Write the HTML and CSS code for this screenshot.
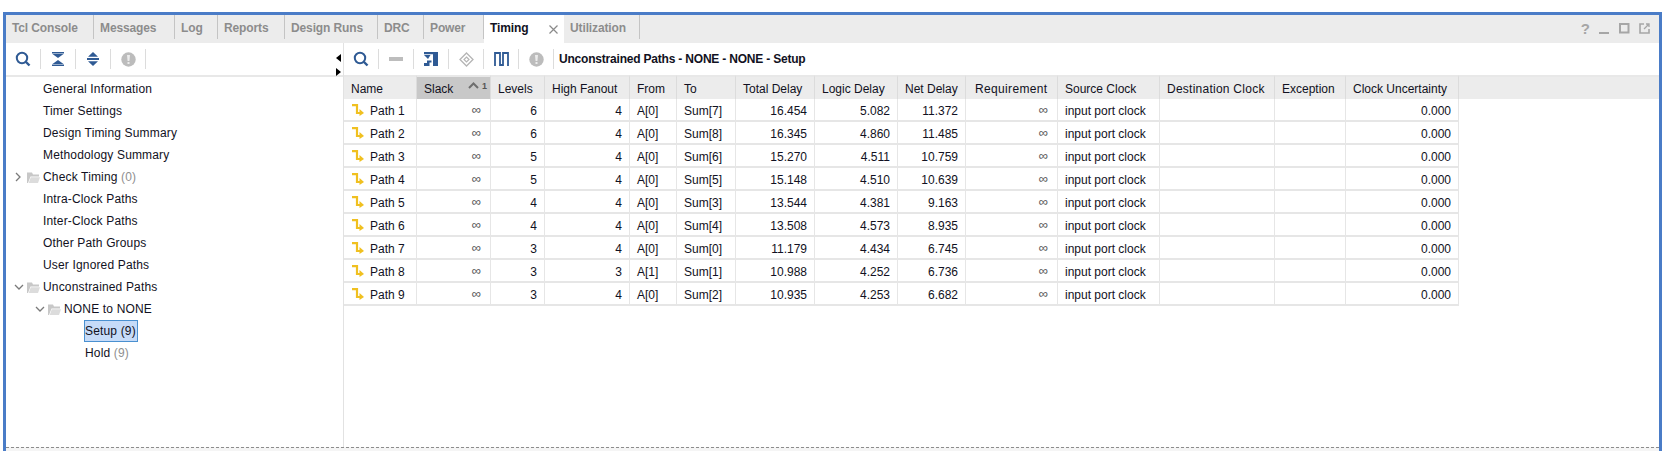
FILE: index.html
```html
<!DOCTYPE html>
<html lang="en">
<head>
    <meta charset="UTF-8">
    <title>Timing</title>
    <link rel="stylesheet" href="styles.css">
</head>
<body>
<div class="frame">

    <div class="tabbar">
        <div class="tab w-tcl">Tcl Console</div>
        <div class="tab w-msg">Messages</div>
        <div class="tab w-log">Log</div>
        <div class="tab w-rep">Reports</div>
        <div class="tab w-run">Design Runs</div>
        <div class="tab w-drc">DRC</div>
        <div class="tab w-pow">Power</div>
        <div class="tab tab-active">Timing<svg class="tab-close" width="9" height="9" viewBox="0 0 9 9"><path d="M.5 .5L8.5 8.5M8.5 .5L.5 8.5" stroke="#8a8a8a" stroke-width="1.2"/></svg></div>
        <div class="tab w-uti">Utilization</div>
        <div class="win-btns">
            <span class="help">?</span>
            <svg width="11" height="11" viewBox="0 0 11 11"><rect x="0" y="9" width="10" height="2" fill="#a6a6a6"/></svg>
            <svg width="11" height="11" viewBox="0 0 11 11"><rect x="1" y="1" width="8.5" height="8.5" fill="none" stroke="#a6a6a6" stroke-width="2"/></svg>
            <svg width="11" height="11" viewBox="0 0 11 11"><path d="M5 1H1V10H10V6" fill="none" stroke="#a6a6a6" stroke-width="1.6"/><path d="M5 6L10 1M7 1H10V4" fill="none" stroke="#a6a6a6" stroke-width="1.3"/></svg>
        </div>
    </div>

    <div class="split">
        <div class="left-pane">
            <div class="toolbar">
                <span class="tool">
                    <svg width="16" height="16" viewBox="0 0 16 16"><circle cx="7" cy="7" r="5.2" fill="none" stroke="#2f5a94" stroke-width="2"/><path d="M11 11L14.5 14.5" stroke="#2f5a94" stroke-width="2.4"/></svg>
                </span>
                <span class="tool">
                    <svg width="12" height="14" viewBox="0 0 12 14"><rect x="0" y="0" width="12" height="1.5" fill="#2f5a94"/><path d="M.5 2H11.5L6 6Z" fill="#2f5a94"/><path d="M.5 12H11.5L6 8Z" fill="#2f5a94"/><rect x="0" y="12.5" width="12" height="1.5" fill="#2f5a94"/></svg>
                </span>
                <span class="tool">
                    <svg width="12" height="14" viewBox="0 0 12 14"><path d="M1 4.8H11L6 0Z" fill="#2f5a94"/><rect x="0" y="6" width="12" height="2" fill="#2f5a94"/><path d="M1 9.2H11L6 14Z" fill="#2f5a94"/></svg>
                </span>
                <span class="tool">
                    <svg width="15" height="15" viewBox="0 0 15 15"><circle cx="7.5" cy="7.5" r="7.2" fill="#bcbcbc"/><path d="M6 3H9L8.4 9H6.6Z" fill="#ececec"/><rect x="6.5" y="10" width="2" height="2" fill="#ececec"/></svg>
                </span>
            </div>
            <div class="tree">
                <div class="node lvl1">General Information</div>
                <div class="node lvl1">Timer Settings</div>
                <div class="node lvl1">Design Timing Summary</div>
                <div class="node lvl1">Methodology Summary</div>
                <div class="node lvl0">
                    <svg class="chev chev-closed" width="8" height="10" viewBox="0 0 8 10"><path d="M2 1L6 5L2 9" fill="none" stroke="#7a7a7a" stroke-width="1.3"/></svg>
                    <svg class="folder" width="13" height="11" viewBox="0 0 13 11"><path d="M0 .5H5L6 2.5H12V4.5H3.5L1 11H0Z" fill="#c8c8c8"/><path d="M3.8 5.3H13L11 11H1.7Z" fill="#dcdcdc"/></svg>
                    <span>Check Timing <span class="count">(0)</span></span>
                </div>
                <div class="node lvl1">Intra-Clock Paths</div>
                <div class="node lvl1">Inter-Clock Paths</div>
                <div class="node lvl1">Other Path Groups</div>
                <div class="node lvl1">User Ignored Paths</div>
                <div class="node lvl0">
                    <svg class="chev" width="10" height="10" viewBox="0 0 10 10"><path d="M1 3L5 7L9 3" fill="none" stroke="#7a7a7a" stroke-width="1.3"/></svg>
                    <svg class="folder" width="13" height="11" viewBox="0 0 13 11"><path d="M0 .5H5L6 2.5H12V4.5H3.5L1 11H0Z" fill="#c8c8c8"/><path d="M3.8 5.3H13L11 11H1.7Z" fill="#dcdcdc"/></svg>
                    <span>Unconstrained Paths</span>
                </div>
                <div class="node lvl0b">
                    <svg class="chev" width="10" height="10" viewBox="0 0 10 10"><path d="M1 3L5 7L9 3" fill="none" stroke="#7a7a7a" stroke-width="1.3"/></svg>
                    <svg class="folder" width="13" height="11" viewBox="0 0 13 11"><path d="M0 .5H5L6 2.5H12V4.5H3.5L1 11H0Z" fill="#c8c8c8"/><path d="M3.8 5.3H13L11 11H1.7Z" fill="#dcdcdc"/></svg>
                    <span>NONE to NONE</span>
                </div>
                <div class="node lvl2"><span class="selected">Setup (9)</span></div>
                <div class="node lvl2"><span>Hold <span class="count">(9)</span></span></div>
            </div>
            <div class="sash-arrows">
                <span class="arrow-left"></span>
                <span class="arrow-right"></span>
            </div>
        </div>

        <div class="right-pane">
            <div class="toolbar">
                <span class="tool">
                    <svg width="16" height="16" viewBox="0 0 16 16"><circle cx="7" cy="7" r="5.2" fill="none" stroke="#2f5a94" stroke-width="2"/><path d="M11 11L14.5 14.5" stroke="#2f5a94" stroke-width="2.4"/></svg>
                </span>
                <span class="tool">
                    <svg width="14" height="14" viewBox="0 0 14 14"><rect x="0" y="5" width="14" height="4" fill="#bdbdbd"/></svg>
                </span>
                <span class="tool">
                    <svg width="14" height="14" viewBox="0 0 14 14"><path d="M0 0H14V14H9V2.2H0Z" fill="#2f5a94"/><path d="M0 3H6.5L4 7Z" fill="#2f5a94"/><path d="M0 11H3V8.5H7.5V10.5H5.5V14H0Z" fill="#2f5a94"/></svg>
                </span>
                <span class="tool">
                    <svg width="15" height="15" viewBox="0 0 15 15"><path d="M7.5 1L14 7.5L7.5 14L1 7.5Z" fill="none" stroke="#b5b5b5" stroke-width="1.3"/><path d="M7.5 5L10 7.5L7.5 10L5 7.5Z" fill="none" stroke="#b5b5b5" stroke-width="1.2"/></svg>
                </span>
                <span class="tool">
                    <svg width="15" height="14" viewBox="0 0 15 14"><path d="M1 14V1H6V13H9V1H14V14" fill="none" stroke="#2f5a94" stroke-width="1.8"/></svg>
                </span>
                <span class="tool">
                    <svg width="15" height="15" viewBox="0 0 15 15"><circle cx="7.5" cy="7.5" r="7.2" fill="#bcbcbc"/><path d="M6 3H9L8.4 9H6.6Z" fill="#ececec"/><rect x="6.5" y="10" width="2" height="2" fill="#ececec"/></svg>
                </span>
                <span class="toolbar-title">Unconstrained Paths - NONE - NONE - Setup</span>
            </div>
            <table class="paths">
                <colgroup>
                    <col class="c-name"><col class="c-slack"><col class="c-levels"><col class="c-fanout">
                    <col class="c-from"><col class="c-to"><col class="c-total"><col class="c-logic">
                    <col class="c-net"><col class="c-req"><col class="c-src"><col class="c-dst">
                    <col class="c-exc"><col class="c-unc"><col>
                </colgroup>
                <thead>
                    <tr>
                        <th>Name</th>
                        <th class="sorted">Slack<span class="sort-mark"><svg width="11" height="7" viewBox="0 0 11 7"><path d="M1 6L5.5 1.5L10 6" fill="none" stroke="#6e6e6e" stroke-width="2"/></svg><span class="sort-num">1</span></span></th>
                        <th>Levels</th><th>High Fanout</th><th>From</th><th>To</th><th>Total Delay</th><th>Logic Delay</th><th>Net Delay</th><th class="th-req">Requirement</th><th>Source Clock</th><th class="th-dst">Destination Clock</th><th>Exception</th><th>Clock Uncertainty</th><th class="filler"></th>
                    </tr>
                </thead>
                <tbody id="pathRows"></tbody>
            </table>
        </div>
    </div>

    <div class="sash-bottom"></div>
</div>

<script>
    var paths = [
        [6, 4, 'A[0]', 'Sum[7]', '16.454', '5.082', '11.372'],
        [6, 4, 'A[0]', 'Sum[8]', '16.345', '4.860', '11.485'],
        [5, 4, 'A[0]', 'Sum[6]', '15.270', '4.511', '10.759'],
        [5, 4, 'A[0]', 'Sum[5]', '15.148', '4.510', '10.639'],
        [4, 4, 'A[0]', 'Sum[3]', '13.544', '4.381', '9.163'],
        [4, 4, 'A[0]', 'Sum[4]', '13.508', '4.573', '8.935'],
        [3, 4, 'A[0]', 'Sum[0]', '11.179', '4.434', '6.745'],
        [3, 3, 'A[1]', 'Sum[1]', '10.988', '4.252', '6.736'],
        [3, 4, 'A[0]', 'Sum[2]', '10.935', '4.253', '6.682']
    ];
    var rows = '';
    paths.forEach(function (p, i) {
        rows += '<tr><td><svg class="path-icon" width="12" height="12" viewBox="0 0 12 12"><path d="M0 1.2H5V9H9" fill="none" stroke="#f0c020" stroke-width="2.2"/><path d="M7.5 5L12 9L7.5 12Z" fill="#f0c020"/></svg>Path ' + (i + 1) + '</td>' +
            '<td class="num inf">&#8734;</td>' +
            '<td class="num">' + p[0] + '</td><td class="num">' + p[1] + '</td>' +
            '<td>' + p[2] + '</td><td>' + p[3] + '</td>' +
            '<td class="num">' + p[4] + '</td><td class="num">' + p[5] + '</td><td class="num">' + p[6] + '</td>' +
            '<td class="num inf">&#8734;</td><td>input port clock</td><td></td><td></td>' +
            '<td class="num">0.000</td><td class="filler"></td></tr>';
    });
    document.getElementById('pathRows').innerHTML = rows;
</script>
</body>
</html>
```

FILE: styles.css
```css
* {
    box-sizing: border-box;
}

body {
    margin: 0;
    padding: 12px 10px 0 3px;
    background: #fff;
    font-family: "Liberation Sans", Arial, sans-serif;
    font-size: 12px;
    color: #111122;
}

.frame {
    height: 439px;
    border: 3px solid #4a7cc7;
    border-bottom: none;
    display: flex;
    flex-direction: column;
}

/* tabs */
.tabbar {
    height: 28px;
    background: #ececec;
    display: flex;
    flex: none;
}

.tab {
    height: 24px;
    padding-left: 6px;
    line-height: 27px;
    font-weight: bold;
    letter-spacing: -.12px;
    color: #8c8c8c;
    border-right: 1px solid #c4c4c4;
    white-space: nowrap;
}

.w-tcl { width: 88px; }
.w-msg { width: 81px; }
.w-log { width: 43px; }
.w-rep { width: 67px; }
.w-run { width: 93px; }
.w-drc { width: 46px; }
.w-pow { width: 60px; }
.w-uti { width: 76px; }

.tab-active {
    width: 80px;
    height: 28px;
    background: #fff;
    color: #111122;
    border-right: none;
}

.tab-close {
    margin-left: 21px;
    vertical-align: -2px;
}

.win-btns {
    margin-left: auto;
    padding-right: 9px;
    display: flex;
    align-items: center;
    gap: 9px;
    height: 26px;
}

.help {
    font-weight: bold;
    font-size: 15px;
    color: #a6a6a6;
}

/* panes */
.split {
    flex: 1;
    display: flex;
    min-height: 0;
}

.left-pane {
    width: 338px;
    flex: none;
    position: relative;
    border-right: 1px solid #e2e2e2;
}

.right-pane {
    flex: 1;
    min-width: 0;
}

.toolbar {
    height: 32px;
    display: flex;
    align-items: center;
}

.tool {
    width: 35px;
    height: 20px;
    display: flex;
    align-items: center;
    justify-content: center;
    border-right: 1px solid #dcdcdc;
}

.toolbar-title {
    margin-left: 5px;
    font-weight: bold;
    letter-spacing: -.2px;
}

.sash-arrows {
    position: absolute;
    top: 11px;
    right: 2px;
    display: flex;
    flex-direction: column;
    gap: 6px;
}

.arrow-left, .arrow-right {
    width: 0;
    height: 0;
    border-top: 4.5px solid transparent;
    border-bottom: 4.5px solid transparent;
}

.arrow-left {
    border-right: 5px solid #000;
}

.arrow-right {
    border-left: 5px solid #000;
}

/* tree */
.tree {
    border-top: 2px solid #e8e8e8;
    padding-top: 1px;
}

.node {
    height: 22px;
    white-space: nowrap;
    display: flex;
    align-items: center;
    letter-spacing: .16px;
}

.node .count {
    color: #8f8f8f;
}

.lvl1 { padding-left: 37px; }
.lvl0 { padding-left: 8px; }
.lvl0b { padding-left: 29px; }
.lvl2 { padding-left: 79px; }

.chev {
    margin-right: 3px;
    flex: none;
}

.chev-closed {
    margin-right: 5px;
}

.folder {
    margin-right: 3px;
    flex: none;
}

.selected {
    width: 54px;
    height: 22px;
    line-height: 20px;
    margin-left: -1px;
    background: #c6dbf8;
    border: 1px solid #4a90d0;
}

/* table */
.paths {
    width: 100%;
    table-layout: fixed;
    border-collapse: separate;
    border-spacing: 0;
}

.c-name { width: 73px; }
.c-slack { width: 74px; }
.c-levels { width: 54px; }
.c-fanout { width: 85px; }
.c-from { width: 47px; }
.c-to { width: 59px; }
.c-total { width: 79px; }
.c-logic { width: 83px; }
.c-net { width: 68px; }
.c-req { width: 92px; }
.c-src { width: 102px; }
.c-dst { width: 115px; }
.c-exc { width: 71px; }
.c-unc { width: 113px; }

.paths th {
    height: 24px;
    background: #ececec;
    font-weight: normal;
    text-align: left;
    padding: 2px 0 0 7px;
    border-right: 1px solid #dcdcdc;
    border-top: 2px solid #e8e8e8;
    white-space: nowrap;
    overflow: hidden;
}

.paths th.sorted {
    background: #c8c8c8;
    position: relative;
}

.paths th.th-req {
    padding-left: 9px;
    letter-spacing: .35px;
}

.paths th.th-dst {
    letter-spacing: .25px;
}

.sort-mark {
    position: absolute;
    top: 5px;
    right: 3px;
    display: flex;
    align-items: flex-start;
    gap: 3px;
}

.sort-num {
    font-size: 9px;
    font-weight: bold;
    line-height: 9px;
    color: #555;
}

.paths th.filler {
    border-right: none;
}

.paths td {
    height: 23px;
    padding: 3px 7px 0;
    border-right: 1px solid #e6e6e6;
    border-bottom: 2px solid #e6e6e6;
    white-space: nowrap;
}

.paths td.filler {
    border: none;
}

.num {
    text-align: right;
}

.paths td.inf {
    padding: 0 9px 0 7px;
    font-size: 13px;
    color: #555;
}

.path-icon {
    margin-left: 1px;
    margin-right: 6px;
    vertical-align: -1px;
}

.sash-bottom {
    height: 4px;
    flex: none;
    background: #f5f5f5;
    border-top: 1px dashed #8c8c8c;
}
```
